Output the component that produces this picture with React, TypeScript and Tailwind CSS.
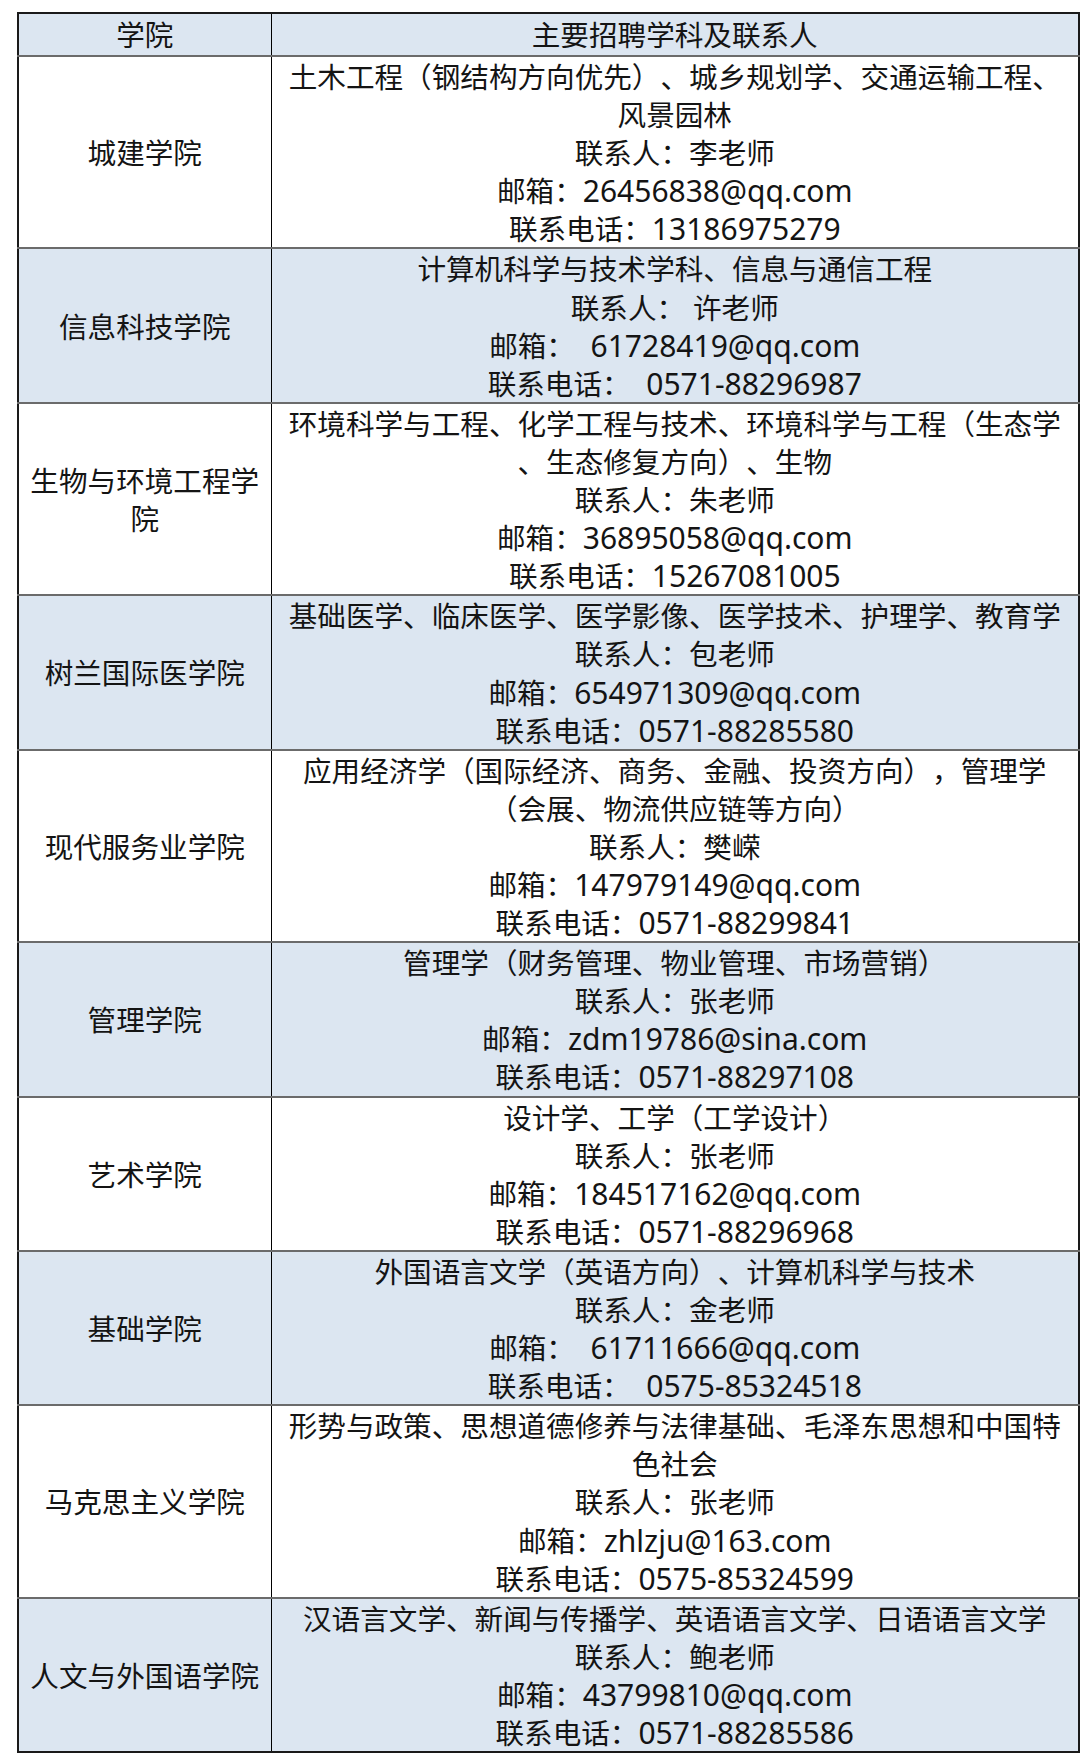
import React from 'react';

type Row = {
  college: string[];
  lines: string[];
};

const rows: Row[] = [
  {
    college: ['城建学院'],
    lines: [
      '土木工程（钢结构方向优先）、城乡规划学、交通运输工程、',
      '风景园林',
      '联系人：李老师',
      '邮箱：26456838@qq.com',
      '联系电话：13186975279',
    ],
  },
  {
    college: ['信息科技学院'],
    lines: [
      '计算机科学与技术学科、信息与通信工程',
      '联系人： 许老师',
      '邮箱：  61728419@qq.com',
      '联系电话：  0571-88296987',
    ],
  },
  {
    college: ['生物与环境工程学', '院'],
    lines: [
      '环境科学与工程、化学工程与技术、环境科学与工程（生态学',
      '、生态修复方向）、生物',
      '联系人：朱老师',
      '邮箱：36895058@qq.com',
      '联系电话：15267081005',
    ],
  },
  {
    college: ['树兰国际医学院'],
    lines: [
      '基础医学、临床医学、医学影像、医学技术、护理学、教育学',
      '联系人：包老师',
      '邮箱：654971309@qq.com',
      '联系电话：0571-88285580',
    ],
  },
  {
    college: ['现代服务业学院'],
    lines: [
      '应用经济学（国际经济、商务、金融、投资方向），管理学',
      '（会展、物流供应链等方向）',
      '联系人：樊嵘',
      '邮箱：147979149@qq.com',
      '联系电话：0571-88299841',
    ],
  },
  {
    college: ['管理学院'],
    lines: [
      '管理学（财务管理、物业管理、市场营销）',
      '联系人：张老师',
      '邮箱：zdm19786@sina.com',
      '联系电话：0571-88297108',
    ],
  },
  {
    college: ['艺术学院'],
    lines: [
      '设计学、工学（工学设计）',
      '联系人：张老师',
      '邮箱：184517162@qq.com',
      '联系电话：0571-88296968',
    ],
  },
  {
    college: ['基础学院'],
    lines: [
      '外国语言文学（英语方向）、计算机科学与技术',
      '联系人：金老师',
      '邮箱：  61711666@qq.com',
      '联系电话：  0575-85324518',
    ],
  },
  {
    college: ['马克思主义学院'],
    lines: [
      '形势与政策、思想道德修养与法律基础、毛泽东思想和中国特',
      '色社会',
      '联系人：张老师',
      '邮箱：zhlzju@163.com',
      '联系电话：0575-85324599',
    ],
  },
  {
    college: ['人文与外国语学院'],
    lines: [
      '汉语言文学、新闻与传播学、英语语言文学、日语语言文学',
      '联系人：鲍老师',
      '邮箱：43799810@qq.com',
      '联系电话：0571-88285586',
    ],
  },
];

// latin runs (emails, phone numbers) get their own wider face, like the original
const Line: React.FC<{ text: string }> = ({ text }) => {
  const parts = text.split(/([\x00-\x7F]+)/).filter(Boolean);
  return (
    <div className="h-[38.1px] whitespace-pre">
      {parts.map((p, k) =>
        /^[\x00-\x7F]+$/.test(p) ? (
          <span key={k} className="[font-family:'Noto_Sans',sans-serif] text-[30px]">
            {p}
          </span>
        ) : (
          <span key={k}>{p}</span>
        )
      )}
    </div>
  );
};

const App: React.FC = () => {
  return (
    <div className="w-[1080px] h-[1753px] bg-white pt-[12px] pl-[17px] [font-family:'Noto_Sans_CJK_SC','Noto_Sans',sans-serif] [text-spacing-trim:space-all] text-[28.6px] leading-[38.1px] text-[#141414]">
      <table className="w-[1063px] border-collapse border-2 border-[#1a1a1a]">
        <thead>
          <tr className="bg-[#dce6f1] border-b-2 border-[#6b6b6b]">
            <th className="w-[253px] h-[43px] font-normal text-center border-r border-black p-0">学院</th>
            <th className="h-[43px] font-normal text-center p-0">主要招聘学科及联系人</th>
          </tr>
        </thead>
        <tbody>
          {rows.map((row, i) => (
            <tr
              key={i}
              className={`${i % 2 === 1 ? 'bg-[#dce6f1]' : 'bg-white'} border-b-2 border-[#6b6b6b] last:border-b-0`}
            >
              <td className="text-center align-middle border-r border-black p-0">
                {row.college.map((c, j) => (
                  <div key={j} className="whitespace-nowrap">{c}</div>
                ))}
              </td>
              <td className="text-center align-middle p-0">
                {row.lines.map((line, j) => (
                  <Line key={j} text={line} />
                ))}
              </td>
            </tr>
          ))}
        </tbody>
      </table>
    </div>
  );
};

export default App;
